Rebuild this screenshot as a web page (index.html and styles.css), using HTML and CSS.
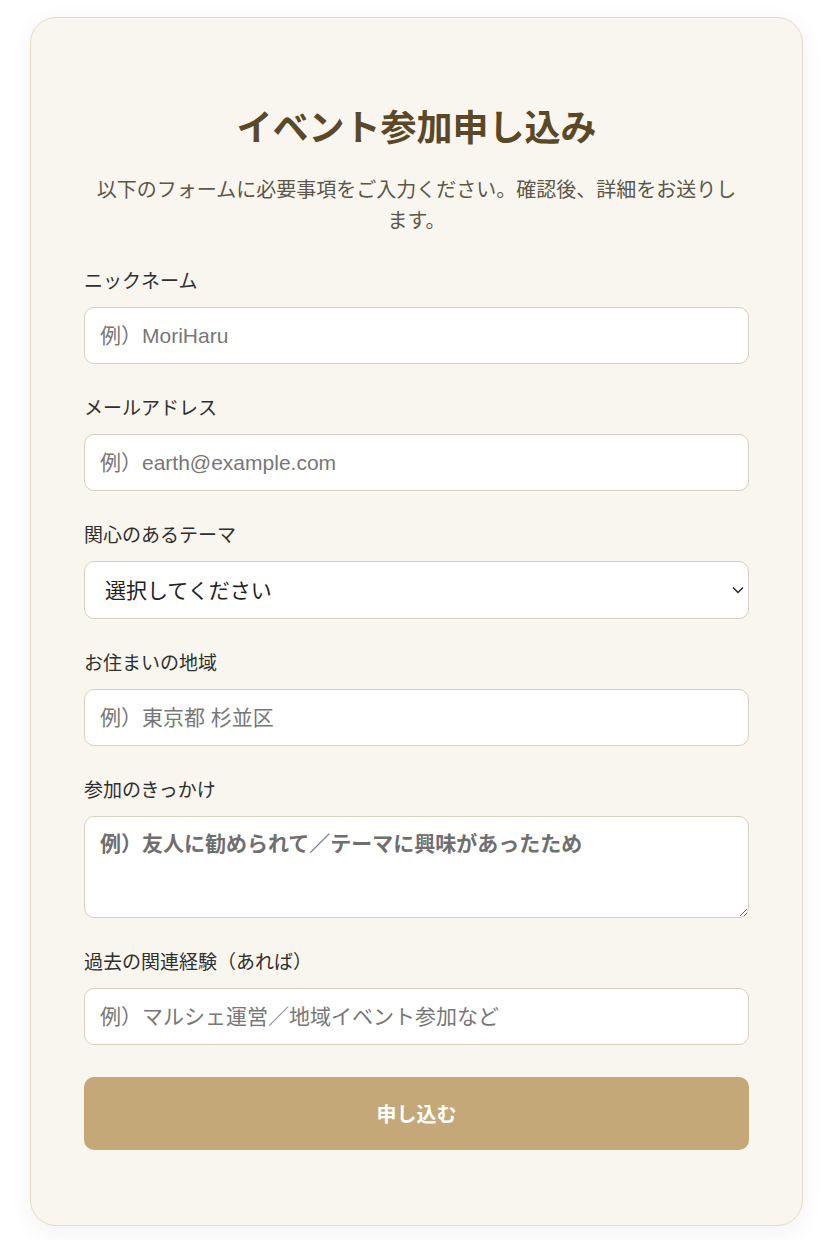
FILE: index.html
```html
<!DOCTYPE html>
<html lang="ja">
<head>
  <meta charset="utf-8">
  <link rel="stylesheet" href="styles.css">
</head>
<body>
  <div class="card">
    <h1 class="title">イベント参加申し込み</h1>
    <p class="lead">以下のフォームに必要事項をご入力ください。確認後、詳細をお送りします。</p>

    <form class="form">
      <div class="field">
        <label for="nickname">ニックネーム</label>
        <input type="text" id="nickname" placeholder="例）MoriHaru">
      </div>

      <div class="field">
        <label for="email">メールアドレス</label>
        <input type="email" id="email" placeholder="例）earth@example.com">
      </div>

      <div class="field">
        <label for="theme">関心のあるテーマ</label>
        <div class="select-wrap">
          <select id="theme">
            <option>選択してください</option>
          </select>
          <svg class="chevron" width="12" height="8" viewBox="0 0 12 8">
            <path d="M1 1.5 L6 6.5 L11 1.5" fill="none" stroke="#222" stroke-width="1.4"/>
          </svg>
        </div>
      </div>

      <div class="field">
        <label for="area">お住まいの地域</label>
        <input type="text" id="area" placeholder="例）東京都 杉並区">
      </div>

      <div class="field">
        <label for="reason">参加のきっかけ</label>
        <textarea id="reason" placeholder="例）友人に勧められて／テーマに興味があったため"></textarea>
      </div>

      <div class="field">
        <label for="career">過去の関連経験（あれば）</label>
        <input type="text" id="career" placeholder="例）マルシェ運営／地域イベント参加など">
      </div>

      <button type="button" class="submit">申し込む</button>
    </form>
  </div>
</body>
</html>
```

FILE: styles.css
```css
body {
  margin: 0;
  padding: 17px 24px 16px 30px;
  background-color: #ffffff;
  font-family: "Liberation Sans", "Noto Sans CJK JP", sans-serif;
  color: #333333;
}

.card {
  background-color: #f9f6ef;
  border: 1px solid #e6dcc6;
  border-radius: 26px;
  padding: 54px 53px 75px 53px;
  box-shadow: 0 6px 24px rgba(0, 0, 0, 0.06);
}

.title {
  margin: 32px 0 0 0;
  text-align: center;
  font-size: 36px;
  line-height: 50px;
  font-weight: bold;
  color: #5a4826;
}

.lead {
  margin: 21px 0 0 0;
  padding: 0 8px;
  text-align: center;
  font-size: 20px;
  line-height: 31px;
  color: #5c564b;
}

.form {
  margin-top: 30px;
}

.field {
  margin-bottom: 30px;
}

.field label {
  display: block;
  font-size: 19px;
  line-height: 30px;
  margin-bottom: 10px;
  color: #2f2f2f;
}

input,
select,
textarea {
  display: block;
  width: 100%;
  box-sizing: border-box;
  border: 1px solid #d8d0bf;
  border-radius: 10px;
  background-color: #ffffff;
  font-family: "Liberation Sans", "Noto Sans CJK JP", sans-serif;
  font-size: 21px;
  color: #222222;
  margin: 0;
}

input {
  height: 57px;
  padding: 0 15px;
}

::placeholder {
  color: #777777;
  opacity: 1;
}

.select-wrap {
  position: relative;
}

select {
  height: 58px;
  padding: 0 40px 0 20px;
  appearance: none;
  -webkit-appearance: none;
}

.chevron {
  position: absolute;
  right: 5px;
  top: 25px;
  pointer-events: none;
}

textarea {
  height: 102px;
  padding: 13px 15px;
  line-height: 28px;
  resize: vertical;
}

textarea::placeholder {
  color: #6f6f6f;
  font-weight: bold;
}

.submit {
  display: block;
  width: 100%;
  height: 73px;
  margin-top: 32px;
  border: none;
  border-radius: 10px;
  background-color: #c4a877;
  color: #ffffff;
  font-family: "Liberation Sans", "Noto Sans CJK JP", sans-serif;
  font-size: 20px;
  font-weight: bold;
  cursor: pointer;
}
```
